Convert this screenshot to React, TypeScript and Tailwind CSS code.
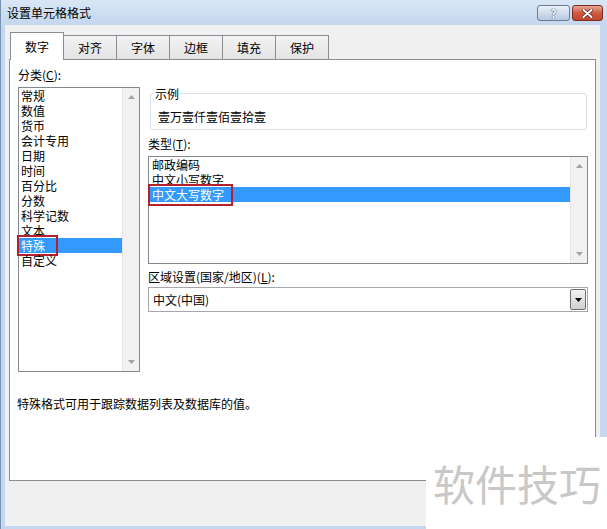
import React from "react";

function Tri({ dir, color }: { dir: "up" | "down"; color: string }) {
  return (
    <svg width="7" height="4" viewBox="0 0 7 4">
      <path d={dir === "up" ? "M0 4 L3.5 0 L7 4Z" : "M0 0 L7 0 L3.5 4Z"} fill={color} />
    </svg>
  );
}

function ScrollBar() {
  return (
    <div className="w-[17px] h-full bg-[#f1f1f1] border-l border-[#e4e4e4] flex flex-col justify-between items-center py-[7px]">
      <Tri dir="up" color="#a3a3a3" />
      <Tri dir="down" color="#a3a3a3" />
    </div>
  );
}

const categories = ["常规", "数值", "货币", "会计专用", "日期", "时间", "百分比", "分数", "科学记数", "文本", "特殊", "自定义"];
const types = ["邮政编码", "中文小写数字", "中文大写数字"];

export default function App() {
  return (
    <div className="w-[607px] h-[529px] relative overflow-hidden bg-[#c3d7ee] border-l border-[#7a92b1] font-['Noto_Sans_CJK_SC','Noto_Sans',sans-serif] text-[12px] text-black">
      {/* Title bar */}
      <div className="h-[25px] flex items-start bg-gradient-to-b from-[#d9e6f5] to-[#c4d7ee]">
        <div className="pl-[6px] h-[25px] flex items-center leading-none text-[12px] text-black">设置单元格格式</div>
        <div className="ml-auto mt-[5px] mr-[4px] flex gap-[2px]">
          <div className="w-[33px] h-[16px] rounded-[3px] border border-[#6c7b90] bg-gradient-to-b from-[#eaf1f9] to-[#b6c9e1] flex items-center justify-center text-[11px] font-bold leading-none text-white [text-shadow:0_0_1px_#2f4360,0_0_1px_#2f4360]">
            ?
          </div>
          <div className="w-[31px] h-[16px] rounded-[3px] border border-[#7d2b1f] bg-gradient-to-b from-[#e6a797] via-[#cd5a40] to-[#c2472e] flex items-center justify-center">
            <svg width="11" height="9" viewBox="0 0 11 9">
              <path d="M1.5 1 L9.5 8 M9.5 1 L1.5 8" stroke="#5a1a10" strokeWidth="3.4" strokeLinecap="round" />
              <path d="M1.5 1 L9.5 8 M9.5 1 L1.5 8" stroke="#ffffff" strokeWidth="2" strokeLinecap="round" />
            </svg>
          </div>
        </div>
      </div>

      {/* Body */}
      <div className="ml-[4px] mr-[7px] h-[501px] bg-[#f0f0f0] px-[4px] pt-[7px] flex flex-col">
        {/* Tabs */}
        <div className="h-[27px] flex items-end pl-[1px] relative z-10">
          <div className="w-[54px] h-[28px] -mb-px border border-b-0 border-[#898c95] bg-white flex items-center justify-center leading-none">
            数字
          </div>
          {["对齐", "字体", "边框", "填充", "保护"].map((t) => (
            <div
              key={t}
              className="w-[54px] -ml-px h-[24px] border border-b-0 border-[#898c95] bg-gradient-to-b from-[#f3f3f3] to-[#e3e3e3] flex items-center justify-center leading-none"
            >
              {t}
            </div>
          ))}
        </div>

        {/* Panel */}
        <div className="h-[422px] border border-[#898c95] bg-white pl-[8px] pt-[7px] flex flex-col">
          <div className="flex">
            {/* Left column */}
            <div className="w-[122px]">
              <div className="h-[15px] leading-[15px]">
                分类(<span className="underline">C</span>):
              </div>
              <div className="mt-[5px] h-[285px] border border-[#828790] flex">
                <div className="flex-1 flex flex-col">
                  {categories.map((c) => (
                    <div
                      key={c}
                      className={
                        "h-[15px] leading-[15px] pl-[2px] relative " +
                        (c === "特殊" ? "bg-[#3399ff] text-white" : "")
                      }
                    >
                      {c}
                      {c === "特殊" && (
                        <div className="absolute -left-[2px] -top-[3px] w-[41px] h-[21px] border-2 border-[#b5202d]" />
                      )}
                    </div>
                  ))}
                </div>
                <ScrollBar />
              </div>
            </div>

            {/* Right column */}
            <div className="ml-[8px] w-[440px] flex flex-col">
              <div className="mt-[26px] ml-[2px] w-[437px] h-[37px] border border-[#d5dfe5] rounded-[3px] relative pl-[7px] pt-[15px] leading-[15px]">
                <div className="absolute left-[3px] -top-[8px] bg-white px-[1px] leading-[15px]">示例</div>
                壹万壹仟壹佰壹拾壹
              </div>
              <div className="mt-[6px] h-[15px] leading-[15px]">
                类型(<span className="underline">T</span>):
              </div>
              <div className="mt-[5px] h-[108px] border border-[#828790] flex">
                <div className="flex-1 flex flex-col">
                  {types.map((t) => (
                    <div
                      key={t}
                      className={
                        "h-[15px] leading-[15px] pl-[3px] relative " +
                        (t === "中文大写数字" ? "bg-[#3399ff] text-white" : "")
                      }
                    >
                      {t}
                      {t === "中文大写数字" && (
                        <div className="absolute -left-[1px] -top-[3px] w-[85px] h-[22px] border-2 border-[#b5202d]" />
                      )}
                    </div>
                  ))}
                </div>
                <ScrollBar />
              </div>
              <div className="mt-[5px] h-[15px] leading-[15px]">
                区域设置(国家/地区)(<span className="underline">L</span>):
              </div>
              <div className="mt-[3px] h-[25px] border border-[#a5a7ad] flex items-center pl-[4px]">
                <span className="leading-[15px]">中文(中国)</span>
                <div className="ml-auto mr-px w-[16px] h-[21px] rounded-[2px] border border-[#707070] bg-gradient-to-b from-[#f4f4f4] to-[#d0d0d0] flex items-center justify-center">
                  <Tri dir="down" color="#000000" />
                </div>
              </div>
            </div>
          </div>

          <div className="mt-[24px] -ml-px h-[15px] leading-[15px]">特殊格式可用于跟踪数据列表及数据库的值。</div>
        </div>
      </div>

      {/* Watermark overlay */}
      <div className="absolute left-[425px] top-[437px] w-[182px] h-[92px] bg-white flex items-center justify-center text-[42px] leading-none text-[#c8c8c8]">
        软件技巧
      </div>
    </div>
  );
}
